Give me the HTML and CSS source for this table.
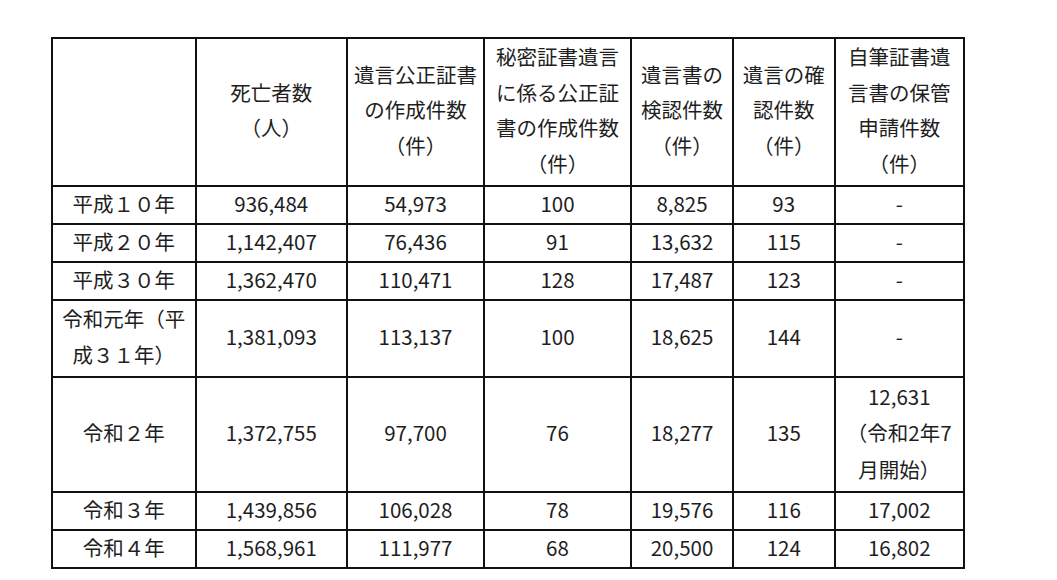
FILE: index.html
```html
<!DOCTYPE html>
<html lang="ja">
<head>
<meta charset="utf-8">
<title>遺言関係統計</title>
<link rel="stylesheet" href="styles.css">
</head>
<body>
<div class="page">
<table class="stats">
  <colgroup>
    <col class="c1"><col class="c2"><col class="c3"><col class="c4"><col class="c5"><col class="c6"><col class="c7">
  </colgroup>
  <thead>
    <tr class="head">
      <th></th>
      <th>死亡者数<br>（人）</th>
      <th>遺言公正証書<br>の作成件数<br>（件）</th>
      <th>秘密証書遺言<br>に係る公正証<br>書の作成件数<br>（件）</th>
      <th>遺言書の<br>検認件数<br>（件）</th>
      <th>遺言の確<br>認件数<br>（件）</th>
      <th>自筆証書遺<br>言書の保管<br>申請件数<br>（件）</th>
    </tr>
  </thead>
  <tbody>
    <tr><td>平成１０年</td><td>936,484</td><td>54,973</td><td>100</td><td>8,825</td><td>93</td><td>-</td></tr>
    <tr><td>平成２０年</td><td>1,142,407</td><td>76,436</td><td>91</td><td>13,632</td><td>115</td><td>-</td></tr>
    <tr><td>平成３０年</td><td>1,362,470</td><td>110,471</td><td>128</td><td>17,487</td><td>123</td><td>-</td></tr>
    <tr class="tall2"><td>令和元年（平<br>成３１年）</td><td>1,381,093</td><td>113,137</td><td>100</td><td>18,625</td><td>144</td><td>-</td></tr>
    <tr class="tall3"><td>令和２年</td><td>1,372,755</td><td>97,700</td><td>76</td><td>18,277</td><td>135</td><td>12,631<br>（令和2年7<br>月開始）</td></tr>
    <tr><td>令和３年</td><td>1,439,856</td><td>106,028</td><td>78</td><td>19,576</td><td>116</td><td>17,002</td></tr>
    <tr><td>令和４年</td><td>1,568,961</td><td>111,977</td><td>68</td><td>20,500</td><td>124</td><td>16,802</td></tr>
  </tbody>
</table>
</div>
</body>
</html>
```

FILE: styles.css
```css
html, body {
  margin: 0;
  padding: 0;
  background: #ffffff;
}

.page {
  padding: 37px 0 0 51px;
}

.stats {
  border-collapse: collapse;
  table-layout: fixed;
  width: 912px;
  font-family: "Noto Sans CJK JP", "Noto Sans", sans-serif;
  font-size: 20.5px;
  font-weight: 400;
  color: #1e1e1e;
}

.c1 { width: 143.5px; }
.c2 { width: 151.5px; }
.c3 { width: 137px; }
.c4 { width: 147px; }
.c5 { width: 102px; }
.c6 { width: 101.5px; }
.c7 { width: 129.5px; }

.stats th,
.stats td {
  border: 2px solid #111111;
  padding: 0 0 4px 0;
  text-align: center;
  vertical-align: middle;
  font-weight: 400;
  line-height: 32px;
  white-space: nowrap;
}

.stats .head th {
  line-height: 35.5px;
}

.stats .tall2 td {
  line-height: 35.5px;
}

.stats .tall3 td {
  line-height: 36.33px;
}
```
